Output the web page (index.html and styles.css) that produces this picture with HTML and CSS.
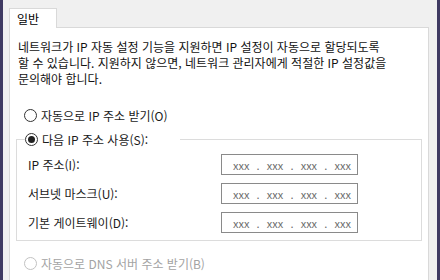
FILE: index.html
```html
<!DOCTYPE html>
<html lang="ko">
<head>
    <meta charset="UTF-8">
    <title>인터넷 프로토콜 버전 4 (TCP/IPv4) 속성</title>
    <link rel="stylesheet" href="styles.css">
</head>
<body>
    <div class="frame">
        <div class="tabs">
            <div class="tab">일반</div>
        </div>
        <div class="panel">
            <p class="desc">
                네트워크가 IP 자동 설정 기능을 지원하면 IP 설정이 자동으로 할당되도록<br>
                할 수 있습니다. 지원하지 않으면, 네트워크 관리자에게 적절한 IP 설정값을<br>
                문의해야 합니다.
            </p>

            <label class="option"><span class="radio"></span>자동으로 IP 주소 받기(O)</label>

            <fieldset class="group">
                <legend><label class="option"><span class="radio checked"></span>다음 IP 주소 사용(S):</label></legend>
                <div class="field">
                    <span class="field-label">IP 주소(I):</span>
                    <div class="ip-box"><span>xxx</span><span>.</span><span>xxx</span><span>.</span><span>xxx</span><span>.</span><span>xxx</span></div>
                </div>
                <div class="field">
                    <span class="field-label">서브넷 마스크(U):</span>
                    <div class="ip-box"><span>xxx</span><span>.</span><span>xxx</span><span>.</span><span>xxx</span><span>.</span><span>xxx</span></div>
                </div>
                <div class="field">
                    <span class="field-label">기본 게이트웨이(D):</span>
                    <div class="ip-box"><span>xxx</span><span>.</span><span>xxx</span><span>.</span><span>xxx</span><span>.</span><span>xxx</span></div>
                </div>
            </fieldset>

            <label class="option disabled"><span class="radio"></span>자동으로 DNS 서버 주소 받기(B)</label>
        </div>
    </div>
</body>
</html>
```

FILE: styles.css
```css
body {
    margin: 0;
    padding: 0;
    font-family: "Noto Sans CJK KR", "Noto Sans", sans-serif;
    font-size: 12px;
    color: #000;
    overflow: hidden;
}

.frame {
    height: 280px;
    box-sizing: border-box;
    background-color: #f0f0f0;
    border-left: 3px solid #3f3a62;
    border-right: 3px solid #3f3a62;
    padding: 8px 8px 0 6px;
}

.tabs {
    display: flex;
}

.tab {
    width: 48px;
    height: 20px;
    box-sizing: border-box;
    background-color: #fff;
    border: 1px solid #d9d9d9;
    border-bottom: none;
    padding-left: 7px;
    line-height: 19px;
    margin-bottom: -1px;
    position: relative;
    z-index: 1;
}

.panel {
    background-color: #fff;
    border: 1px solid #d9d9d9;
    height: 260px;
    box-sizing: border-box;
    padding: 11px 6px 0 8px;
}

.desc {
    margin: 0;
    line-height: 16px;
    color: #111;
}

.option {
    display: flex;
    align-items: center;
    height: 24px;
    color: #1a1a1a;
}

.panel > .option:first-of-type {
    margin-top: 16px;
    padding-left: 6px;
}

.radio {
    width: 11px;
    height: 11px;
    border: 1px solid #333;
    border-radius: 50%;
    margin-right: 4px;
    position: relative;
    flex-shrink: 0;
}

.radio.checked::after {
    content: "";
    position: absolute;
    top: 2px;
    left: 2px;
    width: 7px;
    height: 7px;
    border-radius: 50%;
    background-color: #222;
}

.group {
    margin: 0 0 0 -2px;
    width: 406px;
    box-sizing: border-box;
    border: 1px solid #dcdcdc;
    padding: 0 0 7px 11px;
}

.group legend {
    padding: 0 32px 0 0;
    margin-left: -3px;
    background-color: #fff;
}

.field {
    display: grid;
    grid-template-columns: 193px 137px;
    align-items: center;
    height: 21px;
    margin-top: 8px;
    color: #1a1a1a;
}

.field:first-of-type {
    margin-top: 3px;
}

.ip-box {
    height: 21px;
    box-sizing: border-box;
    border: 1px solid #8a8a8a;
    display: flex;
    align-items: center;
    justify-content: space-between;
    padding: 0 6px 0 11px;
    font-size: 11px;
    color: #6d6d6d;
}

.panel > .option.disabled {
    margin-top: 10px;
    padding-left: 6px;
    color: #a3a3a3;
}

.option.disabled .radio {
    border-color: #c2c2c2;
}
```
